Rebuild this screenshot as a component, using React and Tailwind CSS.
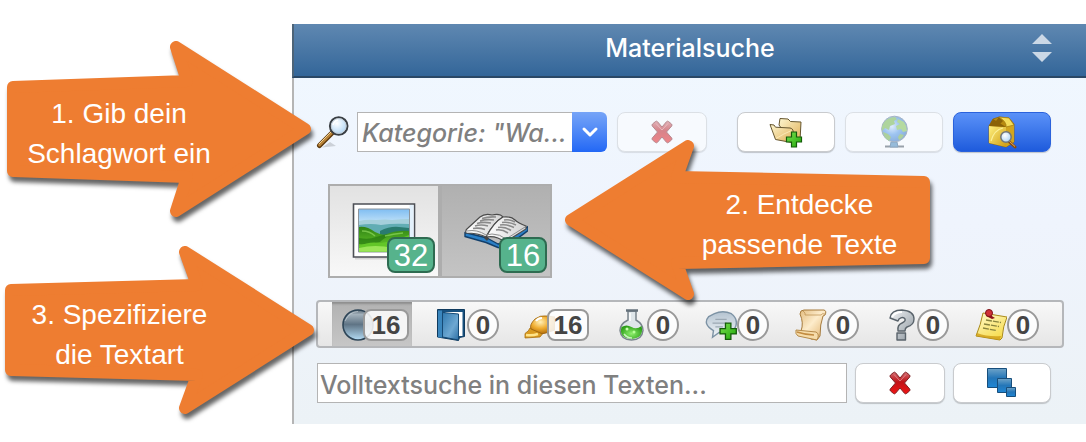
import { useState } from 'react';
import { ChevronDown } from 'lucide-react';

/* ---------- Icons ---------- */

const Gradients = () => (
    <svg className="absolute h-0 w-0" aria-hidden="true">
        <defs>
            <linearGradient id="wood" x1="0" y1="0" x2="1" y2="1">
                <stop offset="0.3" stopColor="#e3b566" />
                <stop offset="0.7" stopColor="#7a4a12" />
            </linearGradient>
            <radialGradient id="lens" cx="0.4" cy="0.35" r="0.7">
                <stop offset="0" stopColor="#ffffff" />
                <stop offset="1" stopColor="#a9d3f5" />
            </radialGradient>
            <linearGradient id="red" x1="0" y1="0" x2="0" y2="1">
                <stop offset="0" stopColor="#d06a6e" />
                <stop offset="0.45" stopColor="#bf1218" />
                <stop offset="1" stopColor="#f01414" />
            </linearGradient>
            <linearGradient id="folder" x1="0" y1="0" x2="1" y2="1">
                <stop offset="0" stopColor="#fdf6cf" />
                <stop offset="1" stopColor="#e0ae55" />
            </linearGradient>
            <linearGradient id="plus" x1="0" y1="0" x2="1" y2="1">
                <stop offset="0" stopColor="#7ce052" />
                <stop offset="1" stopColor="#1fa808" />
            </linearGradient>
            <radialGradient id="ocean" cx="0.4" cy="0.4" r="0.65">
                <stop offset="0" stopColor="#cfe4fb" />
                <stop offset="0.5" stopColor="#4d93e4" />
                <stop offset="1" stopColor="#2468b8" />
            </radialGradient>
            <linearGradient id="gold" x1="0" y1="0" x2="1" y2="1">
                <stop offset="0" stopColor="#fff17e" />
                <stop offset="1" stopColor="#cf9c14" />
            </linearGradient>
            <linearGradient id="note" x1="0" y1="0" x2="0.6" y2="1">
                <stop offset="0" stopColor="#fffbd0" />
                <stop offset="1" stopColor="#f7dc4e" />
            </linearGradient>
            <linearGradient id="sky" x1="0" y1="0" x2="0" y2="1">
                <stop offset="0" stopColor="#7fbdf2" />
                <stop offset="0.5" stopColor="#e6f6fb" />
            </linearGradient>
            <linearGradient id="grass" x1="0" y1="0" x2="0" y2="1">
                <stop offset="0" stopColor="#2f8315" />
                <stop offset="1" stopColor="#6ed02c" />
            </linearGradient>
            <linearGradient id="page" x1="0" y1="0" x2="1" y2="0">
                <stop offset="0" stopColor="#ffffff" />
                <stop offset="1" stopColor="#d2d2d2" />
            </linearGradient>
            <linearGradient id="steel" x1="0" y1="0" x2="0" y2="1">
                <stop offset="0" stopColor="#5b6a76" />
                <stop offset="0.15" stopColor="#a3b1bb" />
                <stop offset="0.48" stopColor="#5f7485" />
                <stop offset="1" stopColor="#b4dcf5" />
            </linearGradient>
            <linearGradient id="blue" x1="0" y1="0" x2="0" y2="1">
                <stop offset="0" stopColor="#6ea3c8" />
                <stop offset="0.5" stopColor="#2476b8" />
                <stop offset="1" stopColor="#1f86d4" />
            </linearGradient>
            <linearGradient id="cover" x1="0" y1="0" x2="1" y2="1">
                <stop offset="0" stopColor="#2f78ae" />
                <stop offset="0.6" stopColor="#6ea8d2" />
                <stop offset="1" stopColor="#2a6da3" />
            </linearGradient>
            <radialGradient id="amber" cx="0.4" cy="0.35" r="0.7">
                <stop offset="0" stopColor="#fff0b8" />
                <stop offset="0.5" stopColor="#f0ad30" />
                <stop offset="1" stopColor="#a86508" />
            </radialGradient>
            <radialGradient id="potion" cx="0.5" cy="0.6" r="0.6">
                <stop offset="0" stopColor="#8ef06c" />
                <stop offset="1" stopColor="#2a9c16" />
            </radialGradient>
            <linearGradient id="bubble" x1="0" y1="0" x2="0" y2="1">
                <stop offset="0" stopColor="#b4c3d0" />
                <stop offset="1" stopColor="#f1f5f8" />
            </linearGradient>
            <linearGradient id="silver" x1="0" y1="0" x2="1" y2="1">
                <stop offset="0" stopColor="#f2f4f6" />
                <stop offset="1" stopColor="#8d979f" />
            </linearGradient>
            <linearGradient id="scroll" x1="0" y1="0" x2="1" y2="1">
                <stop offset="0" stopColor="#e3bd80" />
                <stop offset="0.45" stopColor="#fdeccb" />
                <stop offset="1" stopColor="#ddab62" />
            </linearGradient>
        </defs>
    </svg>
);

const SearchIcon = () => (
    <svg viewBox="0 0 34 34" className="h-[34px] w-[34px] shrink-0" aria-hidden="true">
        <path d="M6 32.500L20 31l-6-4z" fill="#000" opacity="0.15" />
        <path d="M16 18L3.500 30.500" stroke="#5d3a0e" strokeWidth="5" strokeLinecap="round" />
        <path d="M15.500 18L3.500 30" stroke="#b98338" strokeWidth="3" strokeLinecap="round" />
        <path d="M15 17L3 29" stroke="#f0d294" strokeWidth="1" />
        <circle cx="22.700" cy="11" r="8.800" fill="url(#lens)" stroke="#3a3f44" strokeWidth="2" />
        <circle cx="22.700" cy="11" r="7.400" fill="none" stroke="#c5cdd4" strokeWidth="1" />
        <path d="M17 10q1-4 5-5" fill="none" stroke="#fff" strokeWidth="1.500" />
    </svg>
);

const CrossIcon = () => (
    <svg viewBox="0 0 24 24" className="h-6 w-6" aria-hidden="true">
        <path
            d="M5.500 1.500q1-.8 2 .2L12 7l4.500-5.300q1-1 2-.2l3 2.500q1 1 .2 2L16.500 12l5.200 6q.8 1-.2 2l-3 2.500q-1 .8-2-.2L12 17l-4.500 5.300q-1 1-2 .2l-3-2.500q-1-1-.2-2L7.500 12 2.300 6q-.8-1 .2-2z"
            fill="url(#red)"
            stroke="#7d2024"
            strokeWidth="1"
            strokeLinejoin="round"
        />
        <path d="M6 3.500l6 6.500 6-6.500" stroke="#eaa0a2" strokeWidth="1" fill="none" opacity="0.700" />
    </svg>
);

const PlusShape = () => (
    <path d="M5 0h5v5h5v5h-5v5H5v-5H0V5h5z" fill="url(#plus)" stroke="#145c0a" strokeWidth="1.200" />
);

const FolderAddIcon = () => (
    <svg viewBox="0 0 34 32" className="h-8 w-[34px]" aria-hidden="true">
        <path d="M10 9l1-6.500 8 .5 2.500 2.500 10.500.5-1 19-8 1.500z" fill="url(#folder)" stroke="#66562f" strokeWidth="1" />
        <path d="M1 8.500l4 .5 1.500 2.200L21 12c2 .3 3 1.500 3.200 3.500l1 11.500L6.500 23.500z" fill="url(#folder)" stroke="#66562f" strokeWidth="1" strokeLinejoin="round" />
        <path d="M7 22.500q8-5 15.500-8" stroke="#fff4c6" strokeWidth="1" fill="none" opacity="0.700" />
        <g transform="translate(17.500 16)">
            <PlusShape />
        </g>
    </svg>
);

const GlobeIcon = () => (
    <svg viewBox="0 0 32 34" className="h-[34px] w-8" aria-hidden="true">
        <path d="M7 31.500h19" stroke="#444f59" strokeWidth="2" />
        <path d="M13 27h6l1 5h-8z" fill="#3f82b8" stroke="#2a5b86" />
        <circle cx="16.500" cy="14" r="12.800" fill="url(#ocean)" stroke="#62738a" strokeWidth="1" />
        <path d="M5 9q4-7 12-7l2 2-3 2 1 3-5 2-1 4-4-2-3 3q-1-4 1-7z" fill="#6fb33f" />
        <path d="M20 4l6 3q3 4 3 9l-4 1-2-3-4 1-1-4 4-2-3-2z" fill="#7cbf45" />
        <path d="M5 17l5 2 3 3-2 4q-5-3-6-9zM22 19l4 1q-1 3-5 5l-1-3z" fill="#6cab3d" />
    </svg>
);

const PackageSearchIcon = () => (
    <svg viewBox="0 0 32 34" className="h-[34px] w-8" aria-hidden="true">
        <path d="M3 11l4-7 6-2 10 1 5 6v18l-8 5-17-4z" fill="#b88a0f" stroke="#8a650c" strokeWidth="0.800" />
        <path d="M3 11l17 1v20L3 28z" fill="url(#gold)" />
        <path d="M20 12l8-2v17l-8 5z" fill="#d1a51f" />
        <path d="M7 4l13 8-17-1zM13 2l4 4-3 3-4-3z" fill="#8a6208" />
        <path d="M13 2l10 1 5 7-8 2q1-5-7-10z" fill="#f4dc5a" stroke="#a57e12" strokeWidth="0.700" />
        <path d="M5 26Q8 15 17 13" stroke="#fff7a8" strokeWidth="1.200" fill="none" opacity="0.800" />
        <path d="M23 26.500l6 5.500" stroke="#8a4d12" strokeWidth="3" strokeLinecap="round" />
        <path d="M23 26l6 5.500" stroke="#e0ac66" strokeWidth="1" />
        <circle cx="20" cy="22" r="5.200" fill="url(#lens)" stroke="#70757a" strokeWidth="1.500" />
    </svg>
);

const PictureIcon = () => (
    <svg viewBox="0 0 64 58" className="h-[58px] w-16" aria-hidden="true">
        <path d="M3 56.500h60" stroke="#000" strokeWidth="2" opacity="0.120" />
        <path d="M1.500 2h61v53h-61z" fill="#fff" stroke="#4c4f55" strokeWidth="1.600" />
        <path d="M57.500 3h4v51h-4z" fill="#e3f1fc" />
        <path d="M6.500 7h51v43h-51z" fill="url(#sky)" stroke="#8d949c" strokeWidth="1" />
        <path d="M7 19q8-2 17-1 10-1 16 0 10-1 17-1v11H7z" fill="#a5cfdb" />
        <path d="M7 23q12-2 22 0 12-2 28-1v10H7z" fill="#62adb4" />
        <path d="M28 29q10-5 19-4l10 1v10H28z" fill="#2a7b6f" />
        <path d="M7 25q8-1 16 5 8 4 12 2 10-4 22-3v20.500H7z" fill="url(#grass)" />
        <path d="M7 36q10 2 17-1 8-3 16-3-8 4-12 8-10 3-21 2z" fill="#1f700f" opacity="0.600" />
        <path d="M7 44q10-5 22-3 14-2 28-8v16.500H7z" fill="#63c628" />
        <path d="M7 46q16-4 34 0l16 1v2.500H7z" fill="#9be558" />
        <path d="M10 29q8 0 13 5M33 34q8-2 18-3" stroke="#83d055" strokeWidth="1.500" fill="none" opacity="0.800" />
    </svg>
);

const BookIcon = () => (
    <svg viewBox="0 0 64 36" className="h-9 w-16" aria-hidden="true">
        <path d="M1 19.500v4l21 6 12 5 6 1 24-18v-4L40 30l-6 1-11-6z" fill="#2a7fc6" stroke="#123f6b" strokeWidth="1.400" strokeLinejoin="round" />
        <path d="M2 20q-1-3 2-5L16 4q5-4 12-2 8-2 11 2-9 5-17 20-8-4-20-4z" fill="url(#page)" stroke="#4b4b4b" strokeWidth="1.200" />
        <path d="M22 24Q30 9 39 4q8-1 12 3 3 3 11 6v3L41 29q-9-7-19-5z" fill="url(#page)" stroke="#4b4b4b" strokeWidth="1.200" />
        <path d="M3 18q10-2 19 4l6-1q8 0 14 5l19-12" stroke="#8e8e8e" strokeWidth="1" fill="none" />
        <g fill="none" stroke="#8a8a8a" strokeWidth="1.600">
            <path d="M18 5.500q6-2 14-1.500M16 8q6-2 14-1M13 10.500q6-2 14-.5M11 13q6-2 13 0M9 15.500q6-1 12 1" />
            <path d="M40 7q6-1 11 2M38 9.500q7-1 14 2.500M36 12q7-1 14 2.500M34 14.500q7-1 13 3M32 17q6-1 12 3" />
        </g>
        <path d="M20 25q2-3 5 0l-2 3z" fill="#444" />
    </svg>
);

const iconClass = 'h-8 w-8 shrink-0';

const BallIcon = () => (
    <svg viewBox="0 0 32 32" className={iconClass} aria-hidden="true">
        <circle cx="16" cy="16" r="15" fill="url(#steel)" stroke="#2e4557" strokeWidth="1.600" />
        <path d="M3 12q4-9 13-9.500" stroke="#d4dde4" strokeWidth="1" fill="none" opacity="0.600" />
    </svg>
);

const BlueBookIcon = () => (
    <svg viewBox="0 0 32 32" className={iconClass} aria-hidden="true">
        <path d="M2.500.5h27v27l-5 1-1 3L2.500 28z" fill="#17517f" stroke="#0f3a5e" strokeWidth="1" />
        <path d="M10 3h17.500v24H24z" fill="#fff" />
        <path d="M3 1.500h4v27H3z" fill="#3a86bd" />
        <path d="M7.500 3.500l16 1.500v26l-16-3z" fill="url(#cover)" stroke="#164a75" strokeWidth="1" />
    </svg>
);

const BellIcon = () => (
    <svg viewBox="0 0 32 32" className={iconClass} aria-hidden="true">
        <path d="M7 19q-1 3-5 5.500L2 29l15-1 4-5z" fill="#d99a20" stroke="#a8700f" strokeWidth="0.800" />
        <path d="M3 26q6 1 12-1" stroke="#ffe48a" strokeWidth="2.500" fill="none" />
        <path d="M8 20q-2-4 4-10 5-4 12-3l8 1v13l-9 3q-4 2-8-1z" fill="url(#amber)" stroke="#98600c" strokeWidth="0.800" />
        <path d="M13 12q2-3 6-3" stroke="#fff" strokeWidth="2" fill="none" />
    </svg>
);

const FlaskIcon = () => (
    <svg viewBox="0 0 32 32" className={iconClass} aria-hidden="true">
        <path d="M13 2h8v9q7 4 7 10.500Q27 31 16.500 31T5 21.500Q5 15 13 11z" fill="#dfe6ea" stroke="#79848c" strokeWidth="1.500" />
        <path d="M6.500 18q5-3 10 0t10-1q3 12-10 13-13-1-10-12z" fill="url(#potion)" />
        <path d="M11 1.500h12" stroke="#65717b" strokeWidth="2.500" />
        <path d="M15 4v8" stroke="#fff" strokeWidth="1.500" />
        <path d="M9 25q3 4 8 4" stroke="#e6ffe0" strokeWidth="1.500" fill="none" opacity="0.800" />
        <circle cx="12" cy="20" r="1.500" fill="#c9ffae" />
        <circle cx="19" cy="23" r="1.500" fill="#b7ff98" />
    </svg>
);

const CommentAddIcon = () => (
    <svg viewBox="0 0 34 32" className={iconClass} aria-hidden="true">
        <path d="M10 4q9-4 18 0 8 6 4 15-5 6-17 5l-7 5 1-7Q-3 15 4 7z" fill="url(#bubble)" stroke="#7d93a5" strokeWidth="1.500" />
        <path d="M11 10h12M8 14h15M11 18h8" stroke="#9ba8b3" strokeWidth="1.500" />
        <g transform="translate(16 14) scale(1.150)">
            <PlusShape />
        </g>
    </svg>
);

const ScrollIcon = () => (
    <svg viewBox="0 0 32 32" className={iconClass} aria-hidden="true">
        <path d="M5 5q0-4 4-4h20q3 1 1 5l-2 1q-3 8-3 20l-3 4-6-1L6 22q3-8-1-17z" fill="url(#scroll)" stroke="#a67b3d" strokeWidth="1" />
        <path d="M8 2q3 2 2 4h16q1-2 4-1" stroke="#b98b4a" strokeWidth="1" fill="none" opacity="0.700" />
        <path d="M1 21l20 2q4 2 1 8L3 27q-3-2-2-6z" fill="#f6dcaa" stroke="#b58a49" strokeWidth="1" />
        <path d="M2 23q9 3 17 3" stroke="#c28b41" strokeWidth="1.500" fill="none" />
    </svg>
);

const HelpIcon = () => (
    <svg viewBox="0 0 32 32" className={iconClass} aria-hidden="true">
        <path
            d="M5 9q1-8 12-8 12 1 12 9 0 6-7 8-2 1-2 4h-7q-1-6 4-8 4-2 3-4-2-3-6 0l-1 2zM12 24h8.500v7H12z"
            fill="url(#silver)"
            stroke="#59636b"
            strokeWidth="1.400"
            strokeLinejoin="round"
        />
        <path d="M7 8q3-5 10-5" stroke="#fff" strokeWidth="2" fill="none" />
    </svg>
);

const NoteIcon = () => (
    <svg viewBox="0 0 32 32" className={iconClass} aria-hidden="true">
        <path d="M8 4l24 4q-4 9-5 21l-2 2L1 27Q6 15 8 4z" fill="url(#note)" stroke="#a98a1a" strokeWidth="1" />
        <path d="M2 24q11 4 24 3l-1 4L1 27z" fill="#cf9d18" opacity="0.800" />
        <path d="M11 11l15 2.500M9 15l15 2.500M8 19l13 2.500" stroke="#8a853f" strokeWidth="1.300" strokeDasharray="6 1" />
        <path d="M12 4l8 5-3 1-6-3z" fill="#8e1018" />
        <circle cx="14" cy="4" r="3.500" fill="#d03138" stroke="#7c1218" />
    </svg>
);

const SquaresIcon = () => (
    <svg viewBox="0 0 32 32" className="h-8 w-8" aria-hidden="true">
        <g fill="url(#blue)" stroke="#174e7c" strokeWidth="1">
            <path d="M1.500 1.500h19v19h-19z" />
            <path d="M11.500 11.500h14v14h-14z" />
            <path d="M20.500 20.500h9v9h-9z" />
        </g>
    </svg>
);

const SortIcon = () => (
    <svg viewBox="0 0 20 28" className="h-7 w-5" aria-hidden="true">
        <path d="M10 0l10 10H0zM10 28L0 18h20z" fill="#cbd8e6" />
    </svg>
);

/* ---------- Building blocks ---------- */

const Callout = ({ className, viewBox, points, textClass, lines }) => (
    <div className={`pointer-events-none absolute ${className}`}>
        <svg
            viewBox={viewBox}
            className="absolute inset-0 h-full w-full overflow-visible drop-shadow-[2px_5px_2px_rgba(0,0,0,0.6)]"
            aria-hidden="true"
        >
            <polygon points={points} fill="#ee7d31" stroke="#ee7d31" strokeWidth="12" strokeLinejoin="round" />
        </svg>
        <p className={`relative flex h-full flex-col justify-center pt-2.5 text-center font-['Liberation_Sans',sans-serif] text-[28px] leading-10 text-white ${textClass}`}>
            {lines.map(line => (
                <span key={line}>{line}</span>
            ))}
        </p>
    </div>
);

const ActionButton = ({ label, wide, primary, disabled, children }) => (
    <button
        type="button"
        aria-label={label}
        disabled={disabled}
        className={`flex h-10 shrink-0 items-center justify-center rounded-lg border shadow-[0_1px_1px_rgba(0,0,0,0.2)] ${wide ? 'w-[98px]' : 'w-[90px]'
            } ${primary ? 'border-[#2a62dc] bg-linear-to-b from-[#5a91f8] to-[#1e5bdc]' : 'border-[#c9cbce] bg-white'
            } ${disabled ? 'opacity-50' : ''}`}
    >
        {children}
    </button>
);

const MediaTile = ({ label, count, active, children }) => (
    <button
        type="button"
        aria-label={label}
        aria-pressed={active}
        className={`relative flex h-[94px] w-28 items-center justify-center border-2 border-[#adadad] bg-linear-to-b ${active ? 'from-[#b0b0b0] to-[#c4c4c4]' : 'from-[#e2e2e2] to-[#f8f8f8]'
            }`}
    >
        {children}
        <span className="absolute right-[3px] bottom-[3px] flex h-9 w-12 items-center justify-center rounded-lg border-2 border-[#2e6b51] bg-[#56b38c] font-['Liberation_Sans',sans-serif] text-[31px] leading-none text-white">
            {count}
        </span>
    </button>
);

const textTypes = [
    { label: 'Alle', count: 16, Icon: BallIcon, badge: '-ml-[11px] w-[46px] rounded-lg' },
    { label: 'Bücher', count: 0, Icon: BlueBookIcon, badge: 'w-8 rounded-full' },
    { label: 'Meldungen', count: 16, Icon: BellIcon, badge: '-ml-2 w-[42px] rounded-lg' },
    { label: 'Experimente', count: 0, Icon: FlaskIcon, badge: 'w-8 rounded-full' },
    { label: 'Kommentare', count: 0, Icon: CommentAddIcon, badge: 'w-8 rounded-full' },
    { label: 'Quellen', count: 0, Icon: ScrollIcon, badge: 'w-8 rounded-full' },
    { label: 'Fragen', count: 0, Icon: HelpIcon, badge: 'w-8 rounded-full' },
    { label: 'Notizen', count: 0, Icon: NoteIcon, badge: 'w-8 rounded-full' },
];

const App = () => {
    const [activeType, setActiveType] = useState('Alle');

    return (
        <div className="relative bg-white py-6 pl-[292px] font-['Inter',sans-serif]">
            <Gradients />

            <section className="border-l-2 border-[#b5b5b5] bg-linear-to-b from-[#f0f8ff] via-[#eff4fd] to-[#ecf2f6]">
                <header className="-ml-0.5 flex h-[54px] items-center border-b-2 border-l-2 border-b-[#2a4866] border-l-[#4d6478] bg-linear-to-b from-[#5f88b1] to-[#336699] px-[34px] pb-1">
                    <h1 className="flex-1 pl-5 text-center text-[25px] leading-8 font-medium text-white">Materialsuche</h1>
                    <button type="button" aria-label="Sortieren">
                        <SortIcon />
                    </button>
                </header>

                <div className="px-[22px] pt-[34px] pb-[21px]">
                    {/* Category search */}
                    <div className="mr-[13px] flex items-center">
                        <SearchIcon />
                        <div className="ml-[7px] flex min-w-0 flex-1">
                            <input
                                type="text"
                                aria-label="Kategorie"
                                placeholder={'Kategorie: "Wa...'}
                                className="h-10 min-w-0 flex-1 border border-r-0 border-[#b4b4b4] bg-white px-1 pt-0.5 text-[25px] font-medium italic placeholder:text-[#808080]"
                            />
                            <button
                                type="button"
                                aria-label="Kategorien anzeigen"
                                className="flex h-10 w-[35px] items-center justify-center rounded-r-md bg-linear-to-b from-[#76a4f7] to-[#2267f5] text-white"
                            >
                                <ChevronDown className="h-6 w-6" strokeWidth={3} />
                            </button>
                        </div>
                        <div className="ml-2.5">
                            <ActionButton label="Kategorie löschen" disabled>
                                <CrossIcon />
                            </ActionButton>
                        </div>
                        <div className="ml-[30px] flex gap-2.5">
                            <ActionButton label="Ordner hinzufügen" wide>
                                <FolderAddIcon />
                            </ActionButton>
                            <ActionButton label="Im Web suchen" wide disabled>
                                <GlobeIcon />
                            </ActionButton>
                            <ActionButton label="Material suchen" wide primary>
                                <PackageSearchIcon />
                            </ActionButton>
                        </div>
                    </div>

                    {/* Media kinds */}
                    <div className="mt-8 ml-3 flex">
                        <MediaTile label="Bilder" count={32}>
                            <PictureIcon />
                        </MediaTile>
                        <MediaTile label="Texte" count={16} active>
                            <BookIcon />
                        </MediaTile>
                    </div>

                    {/* Text types */}
                    <div className="mt-[22px] flex h-12 gap-2.5 rounded border-2 border-[#b5b7ba] bg-linear-to-b from-[#f8f8f8] to-[#e6e6e6] pl-3.5">
                        {textTypes.map(({ label, count, Icon, badge }) => (
                            <button
                                key={label}
                                type="button"
                                aria-label={label}
                                aria-pressed={activeType === label}
                                onClick={() => setActiveType(label)}
                                className={`flex w-20 items-center justify-end pt-0.5 pr-[3px] ${activeType === label
                                        ? 'bg-linear-to-b from-[#b2b2b2] to-[#c6c6c6] shadow-[inset_0_3px_2px_-1px_#8f8f8f]'
                                        : ''
                                    }`}
                            >
                                <Icon />
                                <span className={`flex h-8 items-center justify-center border-2 border-[#999] bg-white/85 font-['Liberation_Sans',sans-serif] text-[26px] leading-none font-bold text-[#444] ${badge}`}>
                                    {count}
                                </span>
                            </button>
                        ))}
                    </div>

                    {/* Full text search */}
                    <div className="mt-[15px] mr-[13px] flex gap-2 pl-px">
                        <input
                            type="text"
                            aria-label="Volltextsuche"
                            placeholder="Volltextsuche in diesen Texten..."
                            className="h-10 min-w-0 flex-1 border border-[#b4b4b4] bg-white px-0.5 pt-1 text-[25px] font-medium placeholder:text-[#808080]"
                        />
                        <ActionButton label="Volltextsuche löschen">
                            <CrossIcon />
                        </ActionButton>
                        <ActionButton label="Gruppieren" wide>
                            <SquaresIcon />
                        </ActionButton>
                    </div>
                </div>
            </section>

            <Callout
                className="top-[41px] left-[7px] h-44 w-[304px]"
                viewBox="7 41 304 176"
                points="13,87 187,81 176,47 305,129 176,211 187,177 13,171"
                textClass="pr-20"
                lines={['1. Gib dein', 'Schlagwort ein']}
            />
            <Callout
                className="top-[140px] left-[565px] h-40 w-[365px]"
                viewBox="565 140 365 160"
                points="571,220 688,146 677,177 924,182 924,258 677,263 688,294"
                textClass="pl-[104px]"
                lines={['2. Entdecke', 'passende Texte']}
            />
            <Callout
                className="top-[246px] left-[5px] h-[168px] w-[309px]"
                viewBox="5 246 309 168"
                points="11,290 197,285 185,252 308,330 185,408 197,375 11,370"
                textClass="pr-20"
                lines={['3. Spezifiziere', 'die Textart']}
            />
        </div>
    );
};

export default App;
